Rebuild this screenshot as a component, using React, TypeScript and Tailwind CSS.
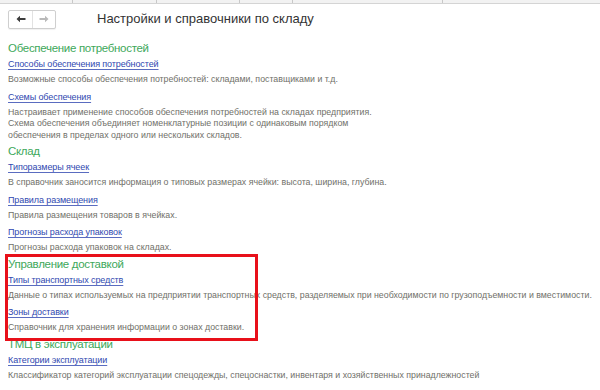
import React from "react";

type Item = { link: string; desc: string[] };
type Section = { title: string; items: Item[] };

const sections: Section[] = [
  {
    title: "Обеспечение потребностей",
    items: [
      {
        link: "Способы обеспечения потребностей",
        desc: ["Возможные способы обеспечения потребностей: складами, поставщиками и т.д."],
      },
      {
        link: "Схемы обеспечения",
        desc: [
          "Настраивает применение способов обеспечения потребностей на складах предприятия.",
          "Схема обеспечения объединяет номенклатурные позиции с одинаковым порядком",
          "обеспечения в пределах одного или нескольких складов.",
        ],
      },
    ],
  },
  {
    title: "Склад",
    items: [
      {
        link: "Типоразмеры ячеек",
        desc: ["В справочник заносится информация о типовых размерах ячейки: высота, ширина, глубина."],
      },
      { link: "Правила размещения", desc: ["Правила размещения товаров в ячейках."] },
      { link: "Прогнозы расхода упаковок", desc: ["Прогнозы расхода упаковок на складах."] },
    ],
  },
  {
    title: "Управление доставкой",
    items: [
      {
        link: "Типы транспортных средств",
        desc: [
          "Данные о типах используемых на предприятии транспортных средств, разделяемых при необходимости по грузоподъемности и вместимости.",
        ],
      },
      { link: "Зоны доставки", desc: ["Справочник для хранения информации о зонах доставки."] },
    ],
  },
  {
    title: "ТМЦ в эксплуатации",
    items: [
      {
        link: "Категории эксплуатации",
        desc: ["Классификатор категорий эксплуатации спецодежды, спецоснастки, инвентаря и хозяйственных принадлежностей"],
      },
    ],
  },
];

function TopStrip() {
  return (
    <div className="flex h-[4px] border-b border-[#d4d4d4] bg-[#f2f2f2]">
      <div className="w-[73px] border-r border-[#c8c8c8]" />
      <div className="w-[84px] border-r border-[#c8c8c8]" />
      <div className="w-[83px] border-r border-[#c8c8c8]" />
      <div className="w-[53px] border-r border-[#c8c8c8]" />
      <div className="w-[150px] border-r border-[#c8c8c8]" />
      <div className="flex-1" />
    </div>
  );
}

function NavButtons() {
  return (
    <div className="flex h-[19px] w-[48px] rounded-[2px] border border-[#cfcfcf] bg-white shadow-[0_1px_1px_rgba(0,0,0,0.06)]">
      <div className="flex w-[24px] items-center justify-center border-r border-[#e2e2e2]">
        <svg width="10" height="8" viewBox="0 0 10 8">
          <path d="M0.5 4 L4 0.8 L4 3 L9.5 3 L9.5 5 L4 5 L4 7.2 Z" fill="#3c3c3c" />
        </svg>
      </div>
      <div className="flex flex-1 items-center justify-center">
        <svg width="10" height="8" viewBox="0 0 10 8">
          <path d="M9.5 4 L6 0.8 L6 3 L0.5 3 L0.5 5 L6 5 L6 7.2 Z" fill="#b9b9b9" />
        </svg>
      </div>
    </div>
  );
}

export default function App() {
  return (
    <div
      className="relative h-[390px] w-[600px] overflow-hidden bg-white"
      style={{ fontFamily: '"Liberation Sans", Arial, sans-serif' }}
    >
      <TopStrip />
      <div className="flex items-center px-[8px] pt-[5px]">
        <NavButtons />
        <div className="ml-[41px] text-[13px] leading-[20px] text-[#333]">
          Настройки и справочники по складу
        </div>
      </div>
      <div className="flex flex-col px-[8px] pt-[12px]">
        {sections.map((s, si) => (
          <div key={si} className="flex flex-col">
            <div className="h-[15px] text-[11.5px] leading-[15px] tracking-[-0.3px] text-[#3da85a]">
              {s.title}
            </div>
            {s.items.map((it, ii) => (
              <div key={ii} className="flex flex-col">
                <div className="h-[16px] text-[9px] leading-[16px] tracking-[-0.1px]">
                  <span className="text-[#3048b0] underline decoration-[#5a6cc0] underline-offset-[2px]">
                    {it.link}
                  </span>
                </div>
                <div className="flex flex-col pb-[3px] pt-[2px]">
                  {it.desc.map((d, di) => (
                    <div
                      key={di}
                      className="whitespace-nowrap text-[8.8px] leading-[11.5px] text-[#707069]"
                    >
                      {d}
                    </div>
                  ))}
                </div>
              </div>
            ))}
          </div>
        ))}
      </div>
      <div className="absolute left-[5px] top-[254px] h-[87px] w-[253px] border-[3px] border-[#e8101a]" />
    </div>
  );
}
